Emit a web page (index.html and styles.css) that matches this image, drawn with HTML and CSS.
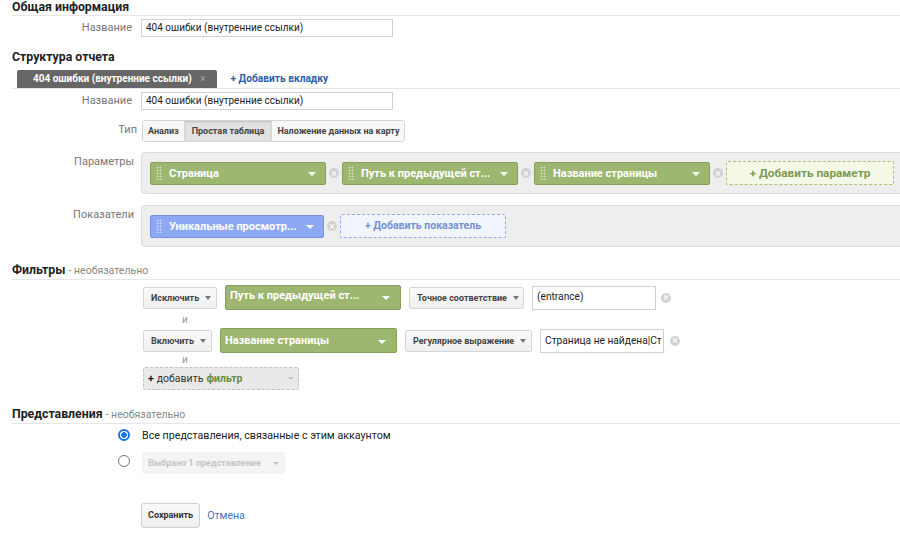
FILE: index.html
```html
<!DOCTYPE html>
<html lang="ru">
<head>
    <meta charset="UTF-8">
    <title>Пользовательский отчет</title>
    <link rel="stylesheet" href="styles.css">
</head>
<body>

<div class="page">
    <h2 class="sec">Общая информация</h2>
    <div class="row row-name1">
        <div class="lbl">Название</div>
        <div class="txt">404 ошибки (внутренние ссылки)</div>
    </div>

    <h2 class="sec sec-plain">Структура отчета</h2>
    <div class="tabs">
        <span class="tab">404 ошибки (внутренние ссылки) <span class="tab-x">×</span></span>
        <a class="add-tab" href="#">+ Добавить вкладку</a>
    </div>
    <div class="row row-name2">
        <div class="lbl">Название</div>
        <div class="txt">404 ошибки (внутренние ссылки)</div>
    </div>
    <div class="row row-type">
        <div class="lbl">Тип</div>
        <div class="seg">
            <span class="seg-b">Анализ</span>
            <span class="seg-b active">Простая таблица</span>
            <span class="seg-b">Наложение данных на карту</span>
        </div>
    </div>
    <div class="row row-params">
        <div class="lbl">Параметры</div>
        <div class="box">
            <div class="chip green"><span class="grip"></span><span class="chip-t">Страница</span><span class="caret"></span></div>
            <span class="rm"></span>
            <div class="chip green"><span class="grip"></span><span class="chip-t">Путь к предыдущей ст...</span><span class="caret"></span></div>
            <span class="rm"></span>
            <div class="chip green"><span class="grip"></span><span class="chip-t">Название страницы</span><span class="caret"></span></div>
            <span class="rm"></span>
            <div class="add add-green">+ Добавить параметр</div>
        </div>
    </div>
    <div class="row row-metrics">
        <div class="lbl">Показатели</div>
        <div class="box">
            <div class="chip blue"><span class="grip"></span><span class="chip-t">Уникальные просмотр...</span><span class="caret"></span></div>
            <span class="rm"></span>
            <div class="add add-blue">+ Добавить показатель</div>
        </div>
    </div>

    <h2 class="sec sec-filters">Фильтры <span class="opt">- необязательно</span></h2>
    <div class="filters">
        <div class="frow frow-1">
            <span class="btn w-excl">Исключить <span class="dcaret"></span></span>
            <span class="fsel">Путь к предыдущей ст... <span class="caret"></span></span>
            <span class="btn w-exact">Точное соответствие <span class="dcaret"></span></span>
            <span class="finput">(entrance)</span>
            <span class="rm"></span>
        </div>
        <div class="and">и</div>
        <div class="frow frow-2">
            <span class="btn w-incl">Включить <span class="dcaret"></span></span>
            <span class="fsel">Название страницы <span class="caret"></span></span>
            <span class="btn w-regex">Регулярное выражение <span class="dcaret"></span></span>
            <span class="finput">Страница не найдена|Ст</span>
            <span class="rm"></span>
        </div>
        <div class="and and-2">и</div>
        <div class="add-filter"><b>+</b> добавить <span class="fword">фильтр</span> <span class="lcaret"></span></div>
    </div>

    <h2 class="sec sec-views">Представления <span class="opt">- необязательно</span></h2>
    <div class="views">
        <div class="vrow">
            <span class="radio on"></span>
            <span class="vtext">Все представления, связанные с этим аккаунтом</span>
        </div>
        <div class="vrow vrow-2">
            <span class="radio"></span>
            <span class="vsel">Выбрано 1 представление <span class="lcaret"></span></span>
        </div>
    </div>

    <div class="actions">
        <span class="save">Сохранить</span>
        <a class="cancel" href="#">Отмена</a>
    </div>
</div>

</body>
</html>
```

FILE: styles.css
```css
html {
    overflow: hidden;
}
body {
    margin: 0;
    background: #fff;
    font-family: Roboto, "Liberation Sans", Arial, sans-serif;
    font-size: 11px;
    color: #222;
}
.page {
    padding-left: 12px;
}
.sec {
    margin: 0;
    font-size: 12.3px;
    line-height: 15px;
    font-weight: bold;
    color: #222;
    border-bottom: 1px solid #e6e6e6;
}
.sec-plain {
    margin-top: 13px;
    border-bottom: none;
}
.sec-filters {
    margin-top: 15px;
    line-height: 16px;
}
.sec-views {
    margin-top: 16px;
    line-height: 16px;
}
.opt {
    font-size: 10.5px;
    font-weight: normal;
    color: #888;
}
.row {
    display: flex;
    align-items: flex-start;
}
.lbl {
    width: 120px;
    padding-right: 9px;
    text-align: right;
    color: #777;
    font-size: 11px;
    line-height: 18px;
}
.txt {
    box-sizing: border-box;
    width: 252px;
    height: 18px;
    border: 1px solid #d0d0d0;
    padding: 0 4px;
    line-height: 16px;
    font-size: 10px;
    color: #222;
}
.row-name1 {
    margin-top: 3px;
}
.row-name2 {
    margin-top: 3px;
}
.tabs {
    display: flex;
    align-items: flex-end;
    margin-top: 5px;
    border-bottom: 1px solid #e6e6e6;
}
.tab {
    height: 18px;
    line-height: 18px;
    margin-left: 5px;
    padding: 0 11px 0 16px;
    background: #666;
    color: #fff;
    font-weight: bold;
    font-size: 10px;
    border-radius: 2px 2px 0 0;
}
.tab-x {
    margin-left: 6px;
    color: #aaa;
    font-size: 10px;
    font-weight: normal;
}
.add-tab {
    margin-left: 14px;
    line-height: 18px;
    font-size: 10.2px;
    color: #2d5fa8;
    font-weight: bold;
    text-decoration: none;
}

/* тип отчета */
.row-type {
    margin-top: 10px;
}
.row-type .lbl {
    line-height: 20px;
    padding-right: 4px;
    width: 125px;
}
.seg {
    display: flex;
    height: 22px;
    border: 1px solid #d6d6d6;
    border-radius: 3px;
    box-sizing: border-box;
    margin-left: 1px;
}
.seg-b {
    padding: 0 5px;
    line-height: 20px;
    font-size: 9px;
    font-weight: bold;
    color: #444;
    white-space: nowrap;
    background: #f7f7f7;
    border-left: 1px solid #d6d6d6;
}
.seg-b:first-child {
    border-left: none;
    border-radius: 3px 0 0 3px;
}
.seg-b:last-child {
    border-radius: 0 3px 3px 0;
}
.seg-b.active {
    background: #e2e2e2;
    box-shadow: inset 0 1px 2px rgba(0, 0, 0, 0.15);
    padding: 0 7px;
}

/* параметры и показатели */
.row-params {
    margin-top: 10px;
}
.row-metrics {
    margin-top: 11px;
}
.row-params .lbl,
.row-metrics .lbl {
    padding-top: 1px;
    width: 122px;
    padding-right: 7px;
}
.box {
    flex: 1;
    display: flex;
    align-items: center;
    gap: 3px;
    margin-right: -8px;
    padding: 8px 8px;
    background: #eeeeee;
    border: 1px solid #dcdcdc;
    border-radius: 4px;
}
.chip {
    box-sizing: border-box;
    display: flex;
    align-items: center;
    width: 176px;
    height: 23px;
    padding: 0 9px 0 5px;
    border-radius: 2px;
    color: #fff;
    font-weight: bold;
    font-size: 11px;
}
.chip.green {
    background: #9db670;
    border: 1px solid #84a05a;
}
.chip.blue {
    width: 174px;
    background: #8ea9f3;
    border: 1px solid #7591e0;
}
.grip {
    width: 6px;
    height: 14px;
    margin-right: 7px;
    background: radial-gradient(circle, rgba(255, 255, 255, 0.6) 0.8px, transparent 1.1px) 0 0 / 3px 3px;
}
.chip-t {
    flex: 1;
    white-space: nowrap;
    overflow: hidden;
}
.caret {
    display: inline-block;
    width: 0;
    height: 0;
    border-top: 4px solid #fff;
    border-left: 4px solid transparent;
    border-right: 4px solid transparent;
    margin-top: 2px;
}
.rm {
    position: relative;
    flex: none;
    width: 10px;
    height: 10px;
    border-radius: 50%;
    background: #d2d2d2;
}
.rm::before,
.rm::after {
    content: "";
    position: absolute;
    left: 2px;
    top: 4.5px;
    width: 6px;
    height: 1px;
    background: #fff;
    transform: rotate(45deg);
}
.rm::after {
    transform: rotate(-45deg);
}
.add {
    box-sizing: border-box;
    height: 24px;
    line-height: 22px;
    text-align: center;
    font-weight: bold;
    border-radius: 2px;
}
.add-green {
    width: 168px;
    font-size: 11.8px;
    background: #f4f9e7;
    border: 1px dashed #a9c07a;
    color: #7f9a52;
}
.add-blue {
    width: 166px;
    font-size: 10.5px;
    background: #f1f5fe;
    border: 1px dashed #93aae6;
    color: #7690d4;
}

/* фильтры */
.filters {
    padding-left: 131px;
    margin-top: 4px;
}
.frow {
    display: flex;
    align-items: center;
    gap: 8px;
}
.frow-1 {
    height: 27px;
}
.frow-2 {
    height: 25px;
}
.btn {
    box-sizing: border-box;
    display: flex;
    align-items: center;
    justify-content: space-between;
    height: 22px;
    padding: 0 6px 0 7px;
    background: linear-gradient(#fafafa, #efefef);
    border: 1px solid #d6d6d6;
    border-radius: 2px;
    font-size: 9px;
    font-weight: bold;
    color: #444;
    white-space: nowrap;
}
.w-excl {
    width: 74px;
}
.w-incl {
    width: 69px;
}
.w-exact {
    width: 115px;
}
.w-regex {
    width: 127px;
}
.dcaret {
    display: inline-block;
    border-top: 4px solid #777;
    border-left: 3px solid transparent;
    border-right: 3px solid transparent;
    margin-left: 6px;
}
.fsel {
    box-sizing: border-box;
    display: flex;
    align-items: center;
    justify-content: space-between;
    width: 176px;
    height: 25px;
    padding: 0 10px 0 4px;
    background: #9db670;
    border: 1px solid #84a05a;
    border-radius: 2px;
    color: #fff;
    font-weight: bold;
    font-size: 11px;
}
.frow-1 .fsel {
    align-items: flex-start;
    line-height: 20px;
}
.frow-1 .fsel .caret {
    margin-top: 10px;
}
.frow-2 .fsel {
    width: 177px;
}
.finput {
    box-sizing: border-box;
    width: 124px;
    height: 24px;
    padding: 0 4px;
    border: 1px solid #cfcfcf;
    font-size: 10.2px;
    line-height: 20px;
    color: #222;
    white-space: nowrap;
    overflow: hidden;
}
.frow-2 .finput {
    line-height: 22px;
}
.frow-1 .rm {
    margin-left: -3px;
}
.frow-2 .rm {
    margin-left: -2px;
}
.and {
    height: 17px;
    line-height: 17px;
    padding-left: 39px;
    font-size: 10px;
    color: #999;
}
.and-2 {
    height: 14px;
    line-height: 14px;
}
.add-filter {
    box-sizing: border-box;
    display: flex;
    align-items: center;
    width: 156px;
    height: 23px;
    padding: 0 4px;
    background: #e9e9e9;
    border: 1px dashed #c4c4c4;
    border-radius: 2px;
    font-size: 10.5px;
    color: #333;
}
.add-filter b {
    margin-right: 3px;
    color: #111;
}
.fword {
    margin-left: 3px;
    color: #6e8c3e;
    font-weight: bold;
}
.lcaret {
    display: inline-block;
    margin-left: auto;
    border-top: 3px solid #c4c4c4;
    border-left: 3px solid transparent;
    border-right: 3px solid transparent;
}

/* представления */
.views {
    padding-left: 106px;
}
.vrow {
    display: flex;
    align-items: center;
    height: 22px;
}
.vrow-2 {
    margin-top: 6px;
}
.radio {
    box-sizing: border-box;
    width: 12px;
    height: 12px;
    border-radius: 50%;
    border: 1px solid #777;
    margin-right: 12px;
}
.vrow-2 .radio {
    margin-top: -4px;
}
.radio.on {
    border: 2px solid #1a73e8;
    background: radial-gradient(circle, #1a73e8 48%, #fff 53%);
}
.vtext {
    font-size: 10.7px;
    color: #222;
}
.vsel {
    box-sizing: border-box;
    display: flex;
    align-items: center;
    width: 143px;
    height: 22px;
    padding: 0 6px;
    background: #f4f4f4;
    border-radius: 2px;
    font-size: 9px;
    font-weight: bold;
    color: #c6c6c6;
}

.actions {
    display: flex;
    align-items: center;
    margin-top: 29px;
    padding-left: 129px;
}
.save {
    box-sizing: border-box;
    height: 25px;
    line-height: 23px;
    padding: 0 6px;
    background: linear-gradient(#fafafa, #eeeeee);
    border: 1px solid #d0d0d0;
    border-radius: 3px;
    font-size: 9px;
    font-weight: bold;
    color: #333;
}
.cancel {
    margin-left: 7px;
    color: #3c78c4;
    font-size: 10.6px;
    text-decoration: none;
}
```
